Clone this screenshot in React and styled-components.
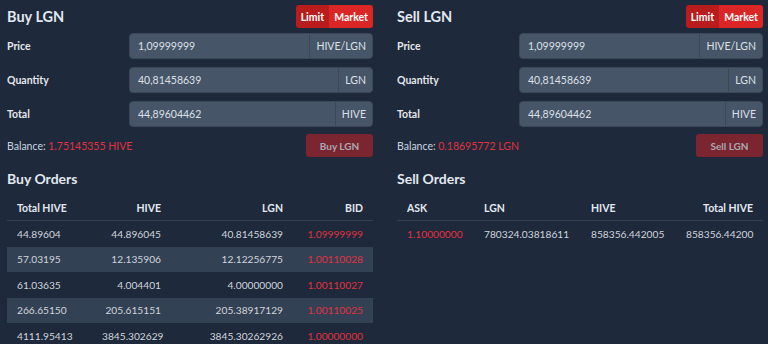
import React from 'react';
import styled, { createGlobalStyle } from 'styled-components';

const GlobalStyle = createGlobalStyle`
  html, body { margin: 0; padding: 0; background: #1e293b; }
  body { font-family: Lato, "Noto Sans", sans-serif; color: #e2e8f0; }
`;

const buyForm = {
  title: 'Buy LGN',
  balance: '1.75145355 HIVE',
  action: 'Buy LGN',
};
const sellForm = {
  title: 'Sell LGN',
  balance: '0.18695772 LGN',
  action: 'Sell LGN',
};

const fields = [
  { label: 'Price', value: '1,09999999', unit: 'HIVE/LGN' },
  { label: 'Quantity', value: '40,81458639', unit: 'LGN' },
  { label: 'Total', value: '44,89604462', unit: 'HIVE' },
];

const buyOrders = {
  title: 'Buy Orders',
  cols: [
    { name: 'Total HIVE', width: 85, align: 'left' },
    { name: 'HIVE', width: 79, align: 'right' },
    { name: 'LGN', width: 122, align: 'right' },
    { name: 'BID', width: 80, align: 'right', red: true },
  ],
  rows: [
    ['44.89604', '44.896045', '40.81458639', '1.09999999'],
    ['57.03195', '12.135906', '12.12256775', '1.00110028'],
    ['61.03635', '4.004401', '4.00000000', '1.00110027'],
    ['266.65150', '205.615151', '205.38917129', '1.00110025'],
    ['4111.95413', '3845.302629', '3845.30262926', '1.00000000'],
  ],
};

const sellOrders = {
  title: 'Sell Orders',
  cols: [
    { name: 'ASK', width: 77, align: 'left', red: true },
    { name: 'LGN', width: 107, align: 'left' },
    { name: 'HIVE', width: 95, align: 'left' },
    { name: 'Total HIVE', width: 87, align: 'right' },
  ],
  rows: [['1.10000000', '780324.03818611', '858356.442005', '858356.44200']],
};

function TradeForm({ form }) {
  return (
    <>
      <Header>
        <Title>{form.title}</Title>
        <Toggle>
          <ToggleBtn $active>Limit</ToggleBtn>
          <ToggleBtn>Market</ToggleBtn>
        </Toggle>
      </Header>
      {fields.map(f => (
        <FormRow key={f.label}>
          <Label>{f.label}</Label>
          <InputGroup>
            <Input defaultValue={f.value} />
            <Addon>{f.unit}</Addon>
          </InputGroup>
        </FormRow>
      ))}
      <ActionRow>
        <Balance>
          Balance: <Red>{form.balance}</Red>
        </Balance>
        <SubmitBtn>{form.action}</SubmitBtn>
      </ActionRow>
    </>
  );
}

function OrderBook({ book }) {
  return (
    <>
      <Heading>{book.title}</Heading>
      <Table>
        <colgroup>
          {book.cols.map(c => <col key={c.name} width={c.width} />)}
        </colgroup>
        <thead>
          <tr>
            {book.cols.map(c => <Th key={c.name} $align={c.align}>{c.name}</Th>)}
          </tr>
        </thead>
        <tbody>
          {book.rows.map((r, i) => (
            <Tr key={i} $striped={i % 2 === 1}>
              {r.map((v, j) => (
                <Td key={j} $align={book.cols[j].align} $red={book.cols[j].red}>{v}</Td>
              ))}
            </Tr>
          ))}
        </tbody>
      </Table>
    </>
  );
}

export default function App() {
  return (
    <>
      <GlobalStyle />
      <Page>
        <Column>
          <TradeForm form={buyForm} />
          <OrderBook book={buyOrders} />
        </Column>
        <Column>
          <TradeForm form={sellForm} />
          <OrderBook book={sellOrders} />
        </Column>
      </Page>
    </>
  );
}

const Page = styled.div`
  display: grid;
  grid-template-columns: 1fr 1fr;
  column-gap: 24px;
  padding: 5px 5px 0 7px;
  height: 339px;
  overflow: hidden;
`;

const Column = styled.div`
  display: flex;
  flex-direction: column;
  min-width: 0;
`;

const Header = styled.div`
  display: flex;
  align-items: center;
  justify-content: space-between;
  height: 23px;
`;

const Title = styled.h2`
  margin: 0;
  font-size: 14.5px;
  font-weight: 700;
  color: #e2e8f0;
`;

const Toggle = styled.div`
  display: flex;
  height: 23px;
  border-radius: 3px;
  overflow: hidden;
`;

const ToggleBtn = styled.button`
  border: none;
  padding: 0 5px;
  font-family: inherit;
  font-size: 10.5px;
  font-weight: 700;
  color: #fff;
  background: ${p => (p.$active ? '#b91c1c' : '#dc2626')};
`;

const FormRow = styled.div`
  display: grid;
  grid-template-columns: 122px 1fr;
  align-items: center;
  height: 26px;
  margin-top: 8px;
  &:nth-of-type(2) { margin-top: 5px; }
`;

const Label = styled.label`
  font-size: 10.5px;
  font-weight: 700;
  color: #e5e7eb;
`;

const InputGroup = styled.div`
  display: flex;
  height: 26px;
  background: #475569;
  border: 1px solid #3c4759;
  border-radius: 4px;
  box-sizing: border-box;
  overflow: hidden;
`;

const Input = styled.input`
  flex: 1;
  min-width: 0;
  border: none;
  outline: none;
  background: transparent;
  padding: 0 8px;
  font-family: inherit;
  font-size: 10.5px;
  color: #dbe0e6;
`;

const Addon = styled.span`
  display: flex;
  align-items: center;
  padding: 0 6px;
  border-left: 1px solid #3c4759;
  font-size: 10.5px;
  color: #dbe0e6;
`;

const ActionRow = styled.div`
  display: flex;
  align-items: center;
  justify-content: space-between;
  margin-top: 7px;
  height: 23px;
`;

const Balance = styled.span`
  font-size: 10.5px;
  color: #cbd5e1;
`;

const Red = styled.span`
  color: #e0323f;
`;

const SubmitBtn = styled.button`
  height: 23px;
  width: 67px;
  border: none;
  border-radius: 3px;
  background: #7b2530;
  color: #a7a9b2;
  font-family: inherit;
  font-size: 10px;
  font-weight: 700;
`;

const Heading = styled.h3`
  margin: 12px 0 0;
  height: 20px;
  line-height: 20px;
  font-size: 14px;
  font-weight: 700;
  color: #e2e8f0;
`;

const Table = styled.table`
  margin-top: 7px;
  width: 100%;
  table-layout: fixed;
  border-collapse: collapse;
`;

const Th = styled.th`
  height: 24px;
  padding: 0 10px;
  text-align: ${p => p.$align};
  font-size: 10.5px;
  font-weight: 700;
  color: #e2e8f0;
  border-bottom: 1px solid #334155;
`;

const Tr = styled.tr`
  background: ${p => (p.$striped ? '#334155' : 'transparent')};
`;

const Td = styled.td`
  height: 25.5px;
  padding: 0 10px;
  text-align: ${p => p.$align};
  font-size: 10.2px;
  color: ${p => (p.$red ? '#e0323f' : '#d1d5db')};
  white-space: nowrap;
`;
